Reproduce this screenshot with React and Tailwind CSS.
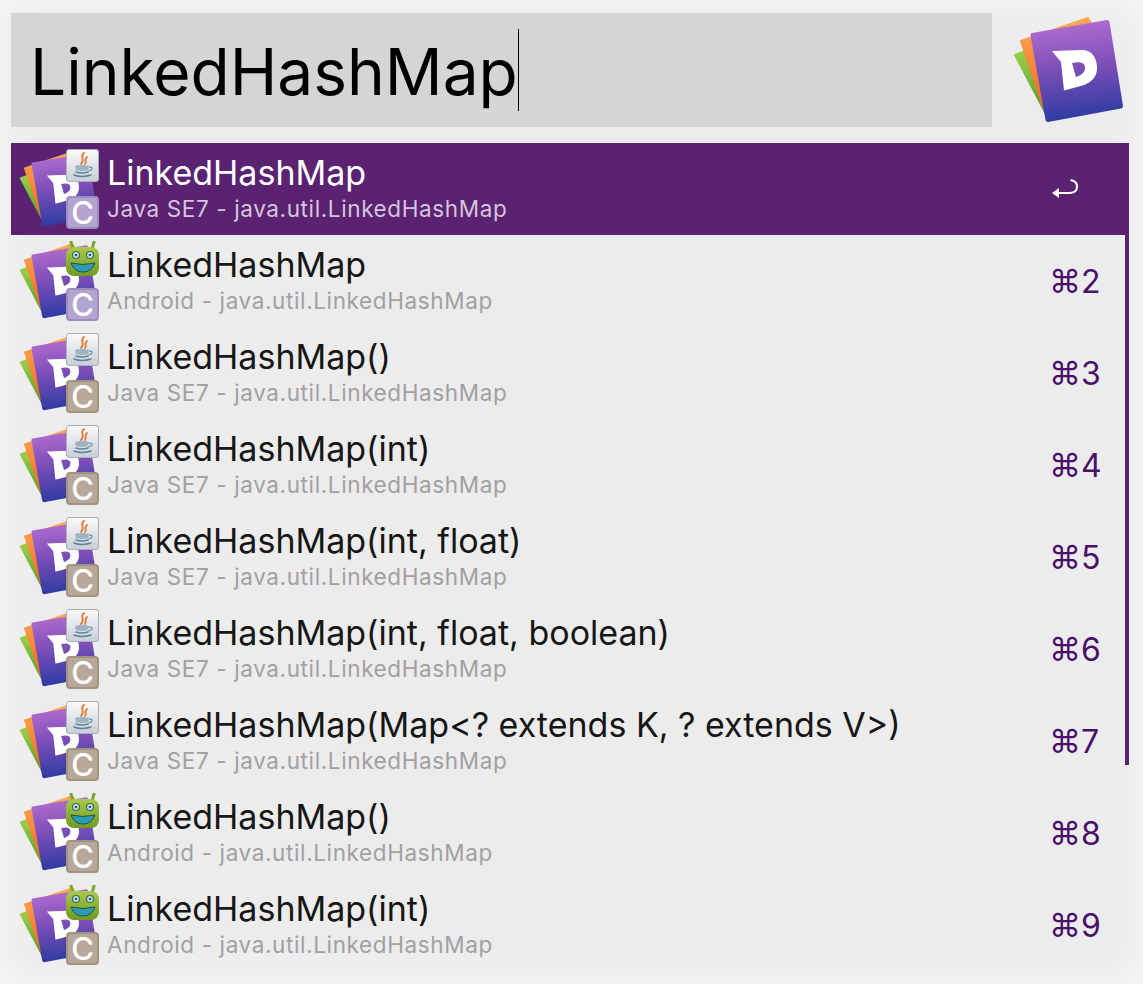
import React from "react";

function DashIcon({ id, className }) {
  return (
    <svg viewBox="0 0 120 112" className={className}>
      <defs>
        <linearGradient id={id + "p"} x1="0" y1="0" x2="0.1" y2="1">
          <stop offset="0" stopColor="#b871d2" />
          <stop offset="0.5" stopColor="#7d4fb8" />
          <stop offset="1" stopColor="#2f3ca3" />
        </linearGradient>
        <linearGradient id={id + "o"} x1="0" y1="0" x2="0" y2="1">
          <stop offset="0" stopColor="#fbaa55" />
          <stop offset="1" stopColor="#f0641e" />
        </linearGradient>
        <linearGradient id={id + "g"} x1="0" y1="0" x2="0" y2="1">
          <stop offset="0" stopColor="#a3d64c" />
          <stop offset="1" stopColor="#4d9a2a" />
        </linearGradient>
      </defs>
      <path d="M6 41 L32 31 L42 100 L36 98 Z" fill={`url(#${id}g)`} stroke={`url(#${id}g)`} strokeWidth="2" strokeLinejoin="round" />
      <path d="M12 27 L79 4 L88 20 L38 100 L34 92 Z" fill={`url(#${id}o)`} stroke={`url(#${id}o)`} strokeWidth="2" strokeLinejoin="round" />
      <path d="M23 19 L98 6 Q100 6 100.500 8 L114 92 Q114 94 112 94.500 L39 108 Q37 108 36.500 106 L21.500 21 Q21.500 19 23 19 Z" fill={`url(#${id}p)`} />
      <path fillRule="evenodd" fill="#fff" d="M43 37 L73 36 C83 36 88 44 88 54 C88 66 78 71 68 73 L55 76.500 L52 48 Z M63 49 L67 63 C73 61 76 58 76 54 C76 49 72 47 63 49 Z" />
    </svg>
  );
}

function JavaBadge() {
  return (
    <svg viewBox="0 0 33 33" className="absolute left-[49px] top-0 w-[33px] h-[33px]">
      <defs>
        <linearGradient id="jb" x1="0" y1="0" x2="0" y2="1">
          <stop offset="0" stopColor="#fafafa" />
          <stop offset="1" stopColor="#c9cfd6" />
        </linearGradient>
      </defs>
      <rect x="0.500" y="0.500" width="32" height="32" rx="2.500" fill="url(#jb)" stroke="#a9b0b8" />
      <path d="M18 4 C13 8 20 10 15 15 M21 8 C18 10 21 12 19 15" fill="none" stroke="#dd7a35" strokeWidth="1.800" strokeLinecap="round" />
      <path d="M9 17 Q16 15 23 17 L22 21 Q16 23 10 21 Z" fill="#9db3c4" />
      <path d="M23 18 Q28 18 25 21 L22 22" fill="none" stroke="#6f8fa8" strokeWidth="1.200" />
      <path d="M10 23 Q16 25 22 23 M8 26 Q16 29 25 26" fill="none" stroke="#5f83a0" strokeWidth="1.500" strokeLinecap="round" />
    </svg>
  );
}

function AndroidBadge() {
  return (
    <svg viewBox="0 0 33 35" className="absolute left-[49px] top-0 w-[33px] h-[35px]">
      <defs>
        <linearGradient id="ab" x1="0" y1="0" x2="0" y2="1">
          <stop offset="0" stopColor="#a8c94c" />
          <stop offset="1" stopColor="#6f9a22" />
        </linearGradient>
      </defs>
      <path d="M5 1 L7 8 M28 1 L26 8" stroke="#7ba52d" strokeWidth="3" strokeLinecap="round" />
      <rect x="0" y="6" width="33" height="29" rx="8" fill="url(#ab)" />
      <circle cx="10" cy="14" r="3.500" fill="#c4dfe0" stroke="#3c6a52" strokeWidth="1.200" />
      <circle cx="24" cy="14" r="3.500" fill="#c4dfe0" stroke="#3c6a52" strokeWidth="1.200" />
      <circle cx="10" cy="14" r="1.300" fill="#2b5a78" />
      <circle cx="24" cy="14" r="1.300" fill="#2b5a78" />
      <path d="M5 22 Q17 25 29 22 Q26 31 17 31 Q8 31 5 22 Z" fill="#2a9bb5" stroke="#1e4a3c" strokeWidth="0.900" />
    </svg>
  );
}

function Row({ title, sub, android, kind, shortcut, selected }) {
  return (
    <div className={`flex items-start h-[92px] ${selected ? "bg-[#5a2271]" : ""}`}>
      <div className="relative w-[96px] h-[92px] shrink-0">
        <DashIcon id={"d" + shortcut} className="absolute left-[5px] top-[6px] w-[86px] h-[80px]" />
        <div className="absolute left-[6px] top-[6px] w-[82px] h-[80px]">
          {android ? <AndroidBadge /> : <JavaBadge />}
          <div
            className={`absolute left-[49px] top-[47px] w-[33px] h-[33px] rounded-[4px] border-2 flex items-center justify-center text-white text-[31px] font-medium leading-none ${
              kind === "class" ? "bg-[#b3a5d0] border-[#9c8dbd]" : "bg-[#b7a89a] border-[#a19282]"
            }`}
          >
            C
          </div>
        </div>
      </div>
      <div className="flex-1 min-w-0 pt-[10px]">
        <div className={`text-[34px] leading-[40px] whitespace-nowrap ${selected ? "text-white" : "text-[#161616]"}`}>{title}</div>
        <div className={`text-[22.5px] tracking-[0.62px] leading-[26px] mt-[3px] whitespace-nowrap ${selected ? "text-[#d5c5dc]" : "text-[#a1a1a1]"}`}>{sub}</div>
      </div>
      <div className="w-[48px] shrink-0 mr-[29px] pt-[28px]">
        {selected ? (
          <svg viewBox="0 0 28 22" className="w-[28px] h-[22px] mt-[7px] -ml-[1px]">
            <path d="M8 15 H19 Q26 14.500 26 8.500 Q26 3 19.500 2" fill="none" stroke="#fff" strokeWidth="2" />
            <path d="M1 15 L8 10 V20 Z" fill="#fff" />
          </svg>
        ) : (
          <div className="text-[32px] leading-[38px] -ml-[3px] text-[#4a0f6b] whitespace-nowrap">
            <span className="font-['DejaVu_Sans',sans-serif] text-[32px]">⌘</span>
            {shortcut}
          </div>
        )}
      </div>
    </div>
  );
}

const rows = [
  ["LinkedHashMap", "Java SE7 - java.util.LinkedHashMap", false, "class", "1", true],
  ["LinkedHashMap", "Android - java.util.LinkedHashMap", true, "class", "2"],
  ["LinkedHashMap()", "Java SE7 - java.util.LinkedHashMap", false, "ctor", "3"],
  ["LinkedHashMap(int)", "Java SE7 - java.util.LinkedHashMap", false, "ctor", "4"],
  ["LinkedHashMap(int, float)", "Java SE7 - java.util.LinkedHashMap", false, "ctor", "5"],
  ["LinkedHashMap(int, float, boolean)", "Java SE7 - java.util.LinkedHashMap", false, "ctor", "6"],
  ["LinkedHashMap(Map<? extends K, ? extends V>)", "Java SE7 - java.util.LinkedHashMap", false, "ctor", "7"],
  ["LinkedHashMap()", "Android - java.util.LinkedHashMap", true, "ctor", "8"],
  ["LinkedHashMap(int)", "Android - java.util.LinkedHashMap", true, "ctor", "9"],
];

export default function App() {
  return (
    <div className="w-[1143px] h-[984px] overflow-hidden bg-[#ececec] shadow-[inset_0_0_40px_#f9f9f9] font-['Inter',sans-serif] pl-[11px] pr-[14px] pt-[13px]">
      <div className="flex items-start">
        <div className="w-[982px] h-[114px] bg-[#d5d5d5] pl-[19px] flex items-center">
          <span className="text-[64px] leading-[82px] text-black mt-[4px]">LinkedHashMap</span>
          <span className="w-px h-[82px] bg-black" />
        </div>
        <DashIcon id="main" className="w-[120px] h-[112px] ml-[17px] mt-[1px] shrink-0" />
      </div>
      <div className="relative mt-[16px]">
        {rows.map((r) => (
          <Row key={r[4]} title={r[0]} sub={r[1]} android={r[2]} kind={r[3]} shortcut={r[4]} selected={r[5]} />
        ))}
        <div className="absolute right-0 top-0 w-[4px] h-[622px] bg-[#5a2271]" />
      </div>
    </div>
  );
}
